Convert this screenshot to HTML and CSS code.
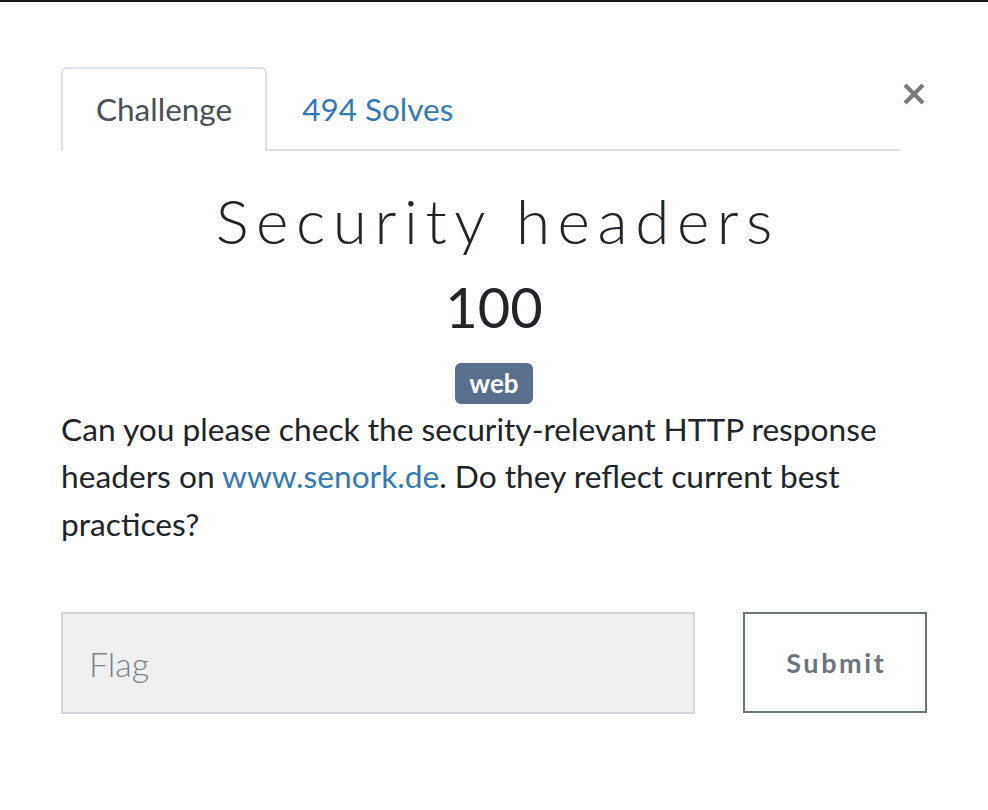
FILE: index.html
```html
<!DOCTYPE html>
<html>
<head>
<meta charset="utf-8">
<link rel="stylesheet" href="styles.css">
</head>
<body>
<div class="topbar"></div>
<div class="modal">
  <div class="head">
    <ul class="tabs">
      <li class="tab active">Challenge</li>
      <li class="tab link">494 Solves</li>
    </ul>
    <button class="close" aria-label="Close">
      <svg width="24" height="24" viewBox="0 0 24 24"><path d="M3 3L21 21M21 3L3 21" stroke="#7b7b7b" stroke-width="4.2" stroke-linecap="butt"/></svg>
    </button>
  </div>
  <h2 class="title">Security headers</h2>
  <h3 class="value">100</h3>
  <div class="tags"><span class="badge">web</span></div>
  <p class="desc">Can you please check the security-relevant HTTP response headers on <a href="#">www.senork.de</a>. Do they reflect current best practices?</p>
  <form class="form">
    <input class="flag" type="text" placeholder="Flag">
    <button class="submit" type="button">Submit</button>
  </form>
</div>
</body>
</html>
```
FILE: styles.css
```css
html, body {
  margin: 0;
  padding: 0;
  background: #fff;
}
body {
  font-family: Lato, "Liberation Sans", sans-serif;
  color: #212529;
}
.topbar {
  height: 2px;
  background: #161616;
}
.modal {
  padding: 65px 0 0 61px;
  width: 866px;
}
.head {
  display: flex;
  align-items: flex-start;
}
.tabs {
  list-style: none;
  margin: 0;
  padding: 0;
  display: flex;
  flex: 1;
  border-bottom: 2px solid #dee2e6;
}
.tab {
  font-size: 31.5px;
  height: 80px;
  line-height: 80px;
  padding: 0 33px;
  border: 2px solid transparent;
  border-bottom: none;
  border-radius: 6px 6px 0 0;
  margin-bottom: -2px;
}
.tab.active {
  color: #495057;
  border-color: #dee2e6;
  background: #fff;
  height: 82px;
}
.tab.link {
  color: #337ab7;
}
.close {
  background: none;
  border: none;
  padding: 0;
  margin: 15px 0 0 2px;
  width: 25px;
  height: 24px;
  display: flex;
}
.title {
  margin: 32px 0 0;
  font-size: 62px;
  font-weight: 300;
  line-height: 1.2;
  letter-spacing: 7.6px;
  text-indent: 7.6px;
  text-align: center;
  color: #212529;
}
.value {
  margin: 16px 0 0;
  font-size: 56px;
  font-weight: 400;
  line-height: 1.2;
  text-align: center;
  color: #212529;
}
.tags {
  margin-top: 22px;
  text-align: center;
  line-height: 0;
}
.badge {
  display: inline-block;
  background: #5a6f8c;
  color: #fff;
  font-weight: 700;
  font-size: 26px;
  line-height: 41px;
  height: 41px;
  padding: 0 14px;
  border-radius: 6px;
}
.desc {
  margin: 2px 0 0;
  width: 839px;
  font-size: 31.7px;
  line-height: 1.5;
}
.desc a {
  color: #337ab7;
  text-decoration: none;
}
.form {
  display: flex;
  margin-top: 64px;
  gap: 48px;
}
.flag {
  width: 634px;
  height: 102px;
  box-sizing: border-box;
  background: #f0f0f0;
  border: 2px solid #d3d7dc;
  padding: 0 26px;
  font-family: Lato, "Liberation Sans", sans-serif;
  font-size: 34px;
  font-weight: 300;
  color: #495057;
  outline: none;
}
.flag::placeholder {
  color: #7a828a;
}
.submit {
  width: 184px;
  height: 101px;
  box-sizing: border-box;
  background: #fff;
  border: 2px solid #6c757d;
  font-family: Lato, "Liberation Sans", sans-serif;
  font-weight: 700;
  font-size: 27px;
  letter-spacing: 2.6px;
  text-indent: 2.6px;
  color: #6c757d;
  padding: 0;
}
```
